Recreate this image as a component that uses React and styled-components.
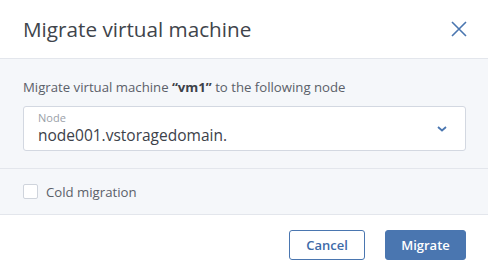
import React from 'react'
import styled, { createGlobalStyle } from 'styled-components'

const Global = createGlobalStyle`
  html, body {
    margin: 0;
    padding: 0;
    background: #fff;
  }
  body {
    font-family: "Open Sans", "Noto Sans", sans-serif;
    color: #3c4149;
  }
`

const Dialog = styled.div`
  width: 488px;
  height: 274px;
  display: flex;
  flex-direction: column;
  background: #fff;
`

const Header = styled.div`
  height: 59px;
  flex-shrink: 0;
  display: flex;
  align-items: center;
  justify-content: space-between;
  padding: 0 21px 0 23px;
  border-bottom: 1px solid #e3e6ec;
  box-sizing: border-box;
`

const Title = styled.h1`
  margin: 0;
  font-size: 20.7px;
  font-weight: 400;
  color: #40444b;
`

const CloseButton = styled.button`
  border: 0;
  background: none;
  padding: 0;
  width: 16px;
  height: 16px;
  display: flex;
  cursor: pointer;
`

const Section = styled.div`
  background: #f5f7fa;
  height: ${({ $h }) => $h}px;
  flex-shrink: 0;
  box-sizing: border-box;
  padding: ${({ $pad }) => $pad};
  border-bottom: 1px solid #e3e6ec;
  display: flex;
  flex-direction: column;
  justify-content: ${({ $center }) => ($center ? 'center' : 'flex-start')};
`

const Description = styled.p`
  margin: 0 0 10px;
  font-size: 13.2px;
  line-height: 18px;
  color: #5b6069;
  b {
    color: #3c4149;
    font-weight: 700;
  }
`

const Select = styled.div`
  height: 45px;
  box-sizing: border-box;
  background: #fff;
  border: 1px solid #d3d8e1;
  border-radius: 3px;
  display: flex;
  align-items: center;
  padding: 0 18px 0 14px;
`

const SelectText = styled.div`
  flex: 1;
  display: flex;
  flex-direction: column;
`

const FieldLabel = styled.span`
  font-size: 11px;
  line-height: 13px;
  color: #9aa0a8;
`

const FieldValue = styled.span`
  font-size: 15.5px;
  line-height: 22px;
  color: #3c4149;
`

const CheckRow = styled.label`
  display: flex;
  align-items: center;
  gap: 8px;
  font-size: 13.2px;
  color: #5b6069;
`

const Box = styled.span`
  width: 13px;
  height: 13px;
  border: 1px solid #cfd4dc;
  border-radius: 2px;
  background: #fff;
`

const Footer = styled.div`
  flex: 1;
  display: flex;
  justify-content: flex-end;
  align-items: center;
  gap: 20px;
  padding: 0 22px 0 0;
`

const Button = styled.button`
  height: 30px;
  padding: 0;
  width: ${({ $w }) => $w}px;
  border-radius: 3px;
  font-family: inherit;
  font-size: 13px;
  font-weight: 600;
  box-sizing: border-box;
  border: 1px solid #4a76b0;
  background: ${({ $primary }) => ($primary ? '#4a76b0' : '#fff')};
  color: ${({ $primary }) => ($primary ? '#fff' : '#3d6aa8')};
`

export default function App() {
  return (
    <>
      <Global />
      <Dialog>
        <Header>
          <Title>Migrate virtual machine</Title>
          <CloseButton aria-label="Close">
            <svg width="16" height="16" viewBox="0 0 16 16">
              <path d="M1 1L15 15M15 1L1 15" stroke="#4a76b0" strokeWidth="1.6" fill="none" />
            </svg>
          </CloseButton>
        </Header>
        <Section $h={110} $pad="19px 22px 0 23px">
          <Description>
            Migrate virtual machine <b>“vm1”</b> to the following node
          </Description>
          <Select>
            <SelectText>
              <FieldLabel>Node</FieldLabel>
              <FieldValue>node001.vstoragedomain.</FieldValue>
            </SelectText>
            <svg width="10" height="6" viewBox="0 0 10 6">
              <path d="M1 1L5 4.5L9 1" stroke="#4a76b0" strokeWidth="1.8" fill="none" />
            </svg>
          </Select>
        </Section>
        <Section $h={46} $pad="0 23px" $center>
          <CheckRow>
            <Box />
            Cold migration
          </CheckRow>
        </Section>
        <Footer>
          <Button $w={76}>Cancel</Button>
          <Button $w={81} $primary>Migrate</Button>
        </Footer>
      </Dialog>
    </>
  )
}
